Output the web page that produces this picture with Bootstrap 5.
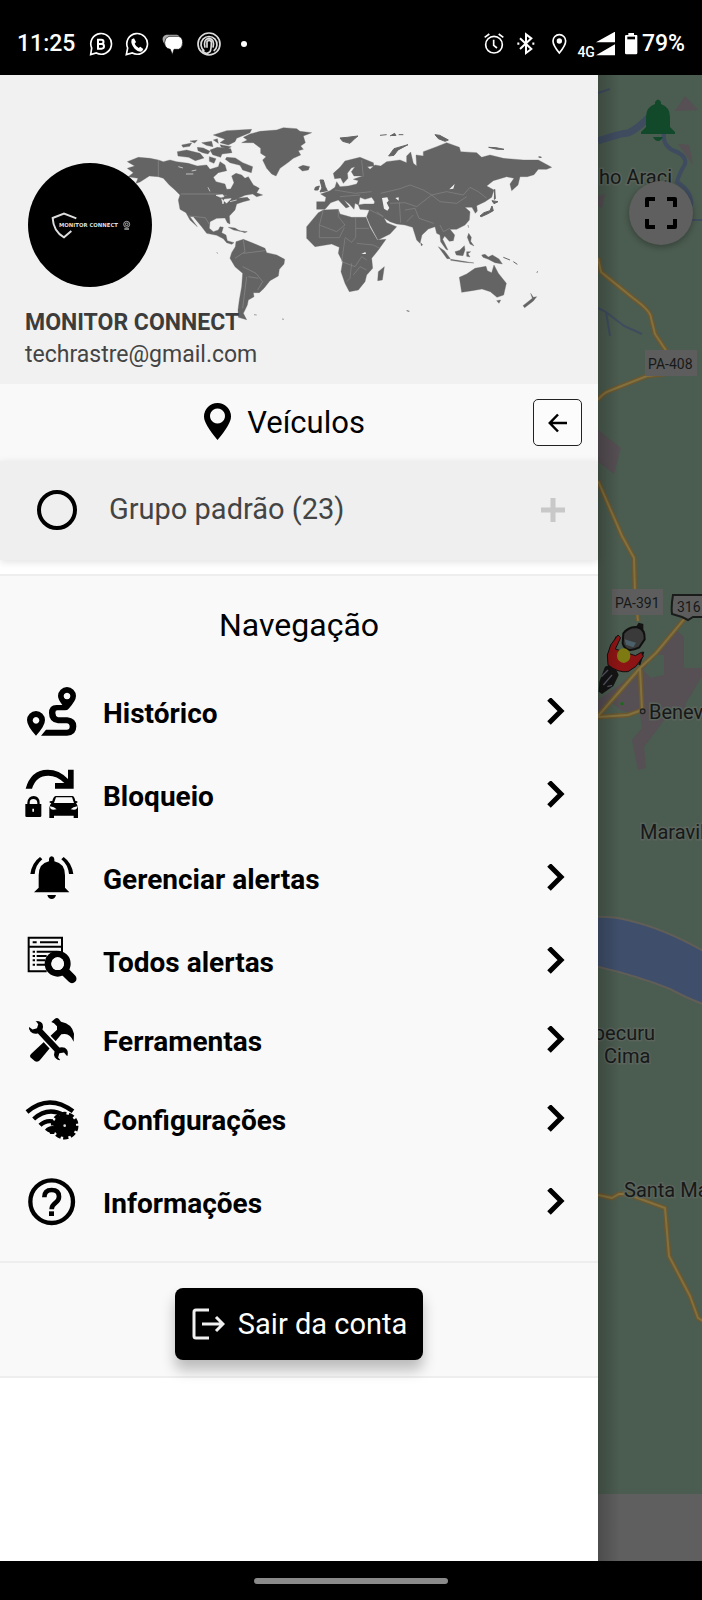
<!DOCTYPE html>
<html lang="pt-BR">
<head>
<meta charset="utf-8">
<meta name="viewport" content="width=device-width, initial-scale=1">
<title>Monitor Connect</title>
<link href="https://cdn.jsdelivr.net/npm/bootstrap@5.3.0/dist/css/bootstrap.min.css" rel="stylesheet">
<style>
  body { font-family: Roboto, "Liberation Sans", sans-serif; background: #000; color: #000; }
  svg { display: block; flex-shrink: 0; }
  .statusbar { height: 75px; padding: 13px 17px 0 17px; font-size: 23px; font-weight: 500; line-height: 28px; color: #fff; }
  .status-icons { gap: 12px; margin-left: 14px; }
  .net-label { font-size: 14px; line-height: 16px; }
  .drawer { width: 85.2%; background: #fff; z-index: 1; }
  .profile { background: #f1f1f1; padding: 88px 25px 13px; }
  .world { top: 49px; left: 120px; width: 440px; }
  .avatar { width: 124px; height: 124px; background: #000; margin-left: 3px; }
  .account { margin-top: 20px; line-height: 32px; font-size: 23px; color: #444; }
  .account strong { font-weight: 700; color: #3c3c3c; }
  .panel { background: #f9f9f9; }
  .vehicles { padding: 15px 16px 15px 36px; }
  .title { font-size: 31px; line-height: 40px; font-weight: 400; }
  .back { width: 49px; height: 47px; background: #fcfcfc; border: 1px solid #222; border-radius: 5px; }
  .group-row { height: 99px; padding: 0 33px 1px 37px; background: #efefef; box-shadow: 0 2px 8px rgba(0,0,0,.12); color: #444; font-size: 29px; }
  .round-check { appearance: none; width: 40px; height: 40px; border: 4px solid #000; border-radius: 50%; margin: 0 32px 0 0; background: transparent; }
  .round-check:checked { background: #000; }
  .rule-top { border-top: 2px solid #eee; }
  .rule-bottom { border-bottom: 2px solid #eee; }
  .nav-panel { margin-top: 14px; padding-bottom: 17px; }
  .nav-title { padding: 29px 0 26px; font-size: 32px; }
  .menu-row { height: 83px; padding: 0 33px 0 25px; gap: 24px; font-size: 28px; font-weight: 700; line-height: 40px; color: #000; text-decoration: none; }
  .menu-row.short { height: 75px; }
  .menu-row span { padding-top: 2px; }
  .exit-panel { padding: 25px 0 16px; }
  .exit { height: 72px; width: 248px; border: 0; border-radius: 8px; background: #000; color: #fff; font-size: 29px; gap: 13px; box-shadow: 0 10px 14px rgba(0,0,0,.25); }
  .exit span { padding-top: 2px; }
  .map { background: #4b5c50; min-width: 0; }
  .map-shade { background: linear-gradient(90deg, rgba(0,0,0,.2), transparent 22px); }
  .map-tools { padding: 24px 9px 0 0; gap: 40px; }
  .map-btn { border: 0; background: none; padding: 0; }
  .map-bell { margin-right: 17px; }
  .map-full { width: 64px; height: 64px; background: #5f5f5f; box-shadow: 0 2px 6px rgba(0,0,0,.3); }
  .homebar { height: 39px; }
  .pill { width: 194px; height: 6px; background: #8a8a8a; }
</style>
</head>
<body>
<div class="d-flex flex-column min-vh-100">

  <header class="statusbar d-flex align-items-center justify-content-between">
    <div class="d-flex align-items-center">
      <span>11:25</span>
      <div class="status-icons d-flex align-items-center">
        <svg width="24" height="24" viewBox="267 94 72 72" fill="none" stroke="#fff" stroke-width="5"><path d="M272 162l3-20a31 31 0 1 1 14 15z"/><path d="M294 117h10a6.500 6.500 0 0 1 0 13h-10zm0 13h11a7 7 0 0 1 0 14h-11z" stroke-width="6"/></svg>
        <svg width="24" height="24" viewBox="375 94 72 72" fill="none" stroke="#fff" stroke-width="5"><path d="M379 162l4-20a31 31 0 1 1 14 15z"/><path fill="#fff" stroke="none" d="M395 116l7-3 6 11-4 5q4 9 12 13l5-4 9 7-4 7q-10 4-22-8-13-14-9-28z"/></svg>
        <svg width="24" height="24" viewBox="483 94 72 72"><path fill="#aaa" d="M499 102h32q8 2 6 9l-40 22q-11-10-9-22 3-7 11-9z"/><path fill="#fff" stroke="#000" stroke-width="2" d="M507 107h28q13 3 13 19t-12 20h-14l-5 16-6-16q-18-3-17-21 1-15 13-18z"/></svg>
        <svg width="24" height="24" viewBox="588 93 72 72" fill="none" stroke="#ddd" stroke-width="5"><circle cx="624" cy="129" r="33"/><path d="M610 150a24 24 0 1 1 28 0M612 140q-6-26 12-28 18 2 12 28M603 148q12 16 24 4 4-6 4-30-7-8-13 0v18"/></svg>
        <svg width="24" height="24" viewBox="0 0 24 24"><circle cx="11" cy="12" r="3" fill="#fff"/></svg>
      </div>
    </div>
    <div class="d-flex align-items-center">
      <svg width="32" height="24" viewBox="376 94 96 72" fill="none" stroke="#fff" stroke-width="5"><circle cx="424" cy="132" r="25"/><path d="M423 117v17l10 8M396 110l14-10M452 110l-14-10"/></svg>
      <svg width="32" height="24" viewBox="472 94 96 72" fill="none" stroke="#fff" stroke-width="6"><path d="M502 113l34 32-16 12v-56l16 12-34 32"/><path d="M494 129h6M539 129h6" stroke-width="7"/></svg>
      <svg width="35" height="24" viewBox="568 94 105 72" fill="none" stroke="#fff" stroke-width="5"><path d="M620 157q-19-23-19-36a19 19 0 0 1 38 0q0 13-19 36z"/><circle cx="620" cy="121" r="8" fill="#fff" stroke="none"/></svg>
      <span class="net-label mt-3">4G</span>
      <svg width="20" height="24" viewBox="735 94 60 72" fill="#fff"><path d="M738 125l57-32v32zM738 164l57-33v33z"/></svg>
      <svg class="ms-2 me-1" width="15" height="24" viewBox="821 95 45 72"><path fill="#fff" d="M837 98h17v6h8q2 0 2 3v51q0 4-4 4h-29q-4 0-4-4v-51q0-3 4-3h6z"/><path fill="#000" d="M834 109h23v8h-23z"/></svg>
      <span>79%</span>
    </div>
  </header>

  <div class="d-flex flex-grow-1 overflow-hidden">
    <aside class="drawer d-flex flex-column flex-shrink-0">

      <section class="profile position-relative">
        <svg class="world position-absolute" viewBox="120 124 440 200" aria-hidden="true">
          <g transform="translate(110 110) scale(.33333)" fill="#646464" stroke="#646464" stroke-linejoin="round">
            <path d="M52 155L85 142 120 145 145 150 160 155 180 150 200 155 235 160 262 168 290 165 300 178 325 170 330 155 345 165 350 182 325 188 310 202 318 215 345 222 350 238 362 237 372 218 365 198 378 190 395 195 405 205 415 200 430 225 448 235 440 248 458 255 440 260 428 252 405 256 385 265 412 262 420 270 400 275 380 282 375 300 358 318 360 342 352 338 345 324 320 325 300 335 298 355 310 365 325 360 330 350 340 352 335 368 348 375 352 392 372 398 365 403 350 398 340 386 320 376 290 370 275 350 250 320 240 320 262 350 240 330 228 308 210 298 205 270 210 255 195 240 178 225 160 205 145 200 118 198 90 216 78 220 84 205 55 200 70 188 52 175 74 168z"/>
            <path d="M378 395L400 388 430 400 465 415 470 428 500 435 524 448 522 462 508 478 505 498 480 512 462 535 448 548 430 548 432 560 415 570 412 585 405 600 400 610 410 629 385 622 384 600 388 570 395 530 398 490 375 470 360 445 365 428 376 410z"/>
            <path d="M400 82L420 72 450 64 500 60 520 53 560 56 570 64 605 68 580 78 586 98 572 108 580 118 565 122 572 135 550 145 535 157 510 175 498 198 485 192 470 175 458 150 468 140 452 130 452 115 430 98 395 98 412 90z"/>
            <path d="M310 75L350 62 425 58 420 68 380 85 375 95 355 105 330 98 345 88z"/>
            <path d="M202 125l28-5 40 10 12 14-26 8-20-10-32-4zM215 105l30-6-6 10-20 3zM240 93l22-2-8 8zM275 98l30-4 4 16-20-4zM262 112l18 2 20 10-6 8-16-4-14-6zM300 120l22-8 40 4 4 12-30 4-4 10-24-8zM330 104l34 6-10 6-20-4zM350 142l26 2 22 14 30 12-4 18-26-8-8-14-30-8-14-10zM298 140l20 6-6 14-14-6zM325 100l-15-10 12-4z"/>
            <path d="M565 172l14-6 20 4-4 10-18 3zM355 352l20 2 16 10-20-4zM388 362l24 3-8 3zM320 428l4 2zM432 614l8 1zM516 627l6 1z"/>
          </g>
          <g transform="translate(290 110) scale(.33333)" fill="#646464" stroke="#646464" stroke-linejoin="round">
            <path d="M80 275L105 275 108 262 92 252 120 242 135 232 140 215 150 230 175 228 200 222 205 212 190 208 218 198 192 198 184 185 195 170 184 174 172 190 174 205 160 220 152 204 134 206 130 190 150 172 165 153 210 142 250 158 252 168 232 170 240 178 255 165 272 168 290 155 330 150 350 158 350 138 362 126 370 160 380 168 378 135 400 138 400 125 440 110 470 98 508 112 512 125 560 128 575 142 600 135 640 145 700 150 745 150 785 172 770 178 745 178 732 194 712 200 690 200 684 225 665 242 660 222 672 205 650 200 610 212 590 228 612 240 605 262 585 275 560 287 562 303 556 310 546 292 525 292 540 305 538 330 525 345 500 358 480 358 494 375 490 392 478 394 464 378 458 388 474 420 468 418 452 395 450 375 440 370 435 350 415 357 396 375 390 400 380 390 368 352 345 345 320 342 300 335 282 324 290 338 320 350 300 372 264 390 240 345 230 320 238 300 210 298 205 285 222 282 252 282 254 275 245 262 225 268 210 262 206 285 195 280 192 298 178 282 162 270 178 290 168 294 145 270 122 278 105 298 80 298z"/>
            <path d="M85 308L100 300 145 298 150 312 185 322 228 322 240 352 262 390 288 388 265 420 245 445 248 475 230 495 225 515 205 540 178 545 165 520 153 485 158 455 145 430 148 412 125 402 75 410 50 385 50 350z"/>
            <path d="M265 485l18-15-6 40-14 2zM508 502l22-10 25-17 33-6 4 13 13 6 7-23 13 25 24 30-8 35-20 7-20-17-25-8-30 5-31 5zM620 572l12-2-5 10zM722 550l8 12 10-2-10 13-26 20-5-6 28-22zM575 435l10-2 10 8 12-6 20 12 10 15-22-4-20-10-16-6zM495 425l14-4 14-14 2 12-6 18-20-2zM445 410l18 12 18 24-10 0zM482 448l20 3 50 8-30-2-40-6zM530 425l12 0-8 6 6 10-10-2zM536 370l8 12-2 12 10 14-12-6-8-20zM534 345l2 8zM392 398l6 6-4 4z"/>
            <path d="M570 318l12-10 18-6 6-14 4 14-18 10-18 8zM606 272l18 3-12 6zM614 238l2 28-3 2zM90 210l10 0 6 20 6 12-22 4 6-12zM76 232l12-4-4 12-10 0zM150 84l22-2 32-4-10 8-14 14-22-6zM296 138l16-22 42-12-30 16-12 16zM435 74l14 2 26 14-10 4-20-8zM596 112l22 1 24 5-20 0zM270 76l20-2M300 78l14-8 4 8M326 74l14 0M746 141l8 1zM640 442l20 8M670 455l12 8M740 487l4-2M350 602l8 2" stroke-width="3"/>
            <path fill="#f1f1f1" stroke="none" d="M276 264l16-2 4 10-6 6 8 16-6 8-10-6zM478 238l16-16-4 14zM214 432l12-6 2 6zM316 264l10-2 0 10z"/>
            <path fill="none" stroke="#919191" stroke-width="1.500" d="M272 250L330 236 360 225 400 240 425 255 470 245 520 255 540 232 565 245 590 265M425 255L450 275 500 280 530 260M300 280L345 278 380 290 425 255M328 278l4 60M345 300l30-5 12 30 44 15M350 335l20-20M215 150l5 50M135 240l60 10 50-5M150 260l60-5M240 300l40 20-20-15M100 300L88 345 140 365 165 345 145 320V298M197 322v60l-12 15-20-15M197 355h40M88 345v38h60l15-30M165 385l-10 70 40 15 20-30 15 10M185 460l-5 45-10 10M190 495l20-25 20 10M200 400l50 5 20 10M450 345l10 20 20-10"/>
          </g>
          <g transform="translate(110 110) scale(.33333)" fill="none" stroke="#999" stroke-width="1.500">
            <path d="M145 150v50M212 252H320l30 5M236 318l50 5 12 20M400 390l5 35-30 20M400 430l65-8M398 470l40 20 20 25-15 25M410 500l-12 95M415 500l30 5"/>
            <path fill="#f1f1f1" stroke="#f1f1f1" stroke-width="2" d="M318 256l20-2 4 6-10 2zM335 266l4 16 4-14 20-2-14 14M360 275l20-5M294 232l6 12M205 170l14 4M228 192l22 0M245 183l14-3"/>
          </g>
        </svg>
        <div class="avatar rounded-circle position-relative overflow-hidden">
          <svg width="124" height="124" viewBox="84 69 372 372" role="img" aria-label="Monitor Connect"><path d="M229 235L192 221 158 234Q160 274 192 292L214 273" fill="none" stroke="#ddd" stroke-width="6"/><text x="177" y="260" font-size="16" font-weight="700" fill="#ddd" font-family="DejaVu Sans, sans-serif">MONITOR CONNECT</text><g fill="none" stroke="#aaa" stroke-width="3"><circle cx="380" cy="253" r="9"/><circle cx="380" cy="253" r="4"/><path d="M373 267h14" stroke-width="5"/></g></svg>
        </div>
        <div class="account position-relative d-flex flex-column">
          <strong>MONITOR CONNECT</strong>
          <span>techrastre@gmail.com</span>
        </div>
      </section>

      <section class="panel vehicles d-flex align-items-center">
        <h2 class="title flex-grow-1 d-flex align-items-center justify-content-center gap-3 mb-0">
          <svg width="27" height="42" viewBox="0 0 27 42"><path fill-rule="evenodd" d="M13.500 38Q0 22 0 14.500a13.500 13.500 0 0 1 27 0Q27 22 13.500 38zm0-31.500a7.500 7.500 0 1 0 .01 0z"/></svg>
          Veículos
        </h2>
        <button type="button" class="back d-flex align-items-center justify-content-center p-0" aria-label="Voltar">
          <svg width="20" height="20" viewBox="0 0 20 20" fill="none" stroke="#000" stroke-width="2.500"><path d="M19 10H2M10 1.500L1.800 10l8.200 8.500"/></svg>
        </button>
      </section>

      <section class="group-row position-relative d-flex align-items-center">
        <input class="round-check" type="checkbox" id="grupo">
        <label for="grupo" class="flex-grow-1">Grupo padrão (23)</label>
        <svg width="24" height="24" viewBox="0 0 24 24"><path d="M12 0v24M0 12h24" stroke="#c8c8c8" stroke-width="5"/></svg>
      </section>

      <nav class="panel nav-panel rule-top">
        <h2 class="title nav-title text-center mb-0">Navegação</h2>

        <a href="#" class="menu-row d-flex align-items-center">
          <svg width="54" height="54" viewBox="75 48 162 162"><path fill-rule="evenodd" d="M108 197Q81 168 81 150a27 27 0 0 1 54 0q0 18-27 47zm0-56a10 10 0 1 0 .1 0zM201 51a27 27 0 0 1 27 27q0 14-22 38-4 5-11 5H172q-6 0-6 7 0 10 8 14h28q27 3 27 27 0 28-28 28H123l15-18h62q9 0 9-9t-9-10H174q-27-3-27-31 0-24 22-24h18Q174 88 174 78a27 27 0 0 1 27-27zm0 17a10 10 0 1 0 .1 0z"/></svg>
          <span class="flex-grow-1">Histórico</span>
          <svg width="18" height="30" viewBox="0 2 18 30"><path d="M2 3l12 12L2 27" fill="none" stroke="#000" stroke-width="5"/></svg>
        </a>
        <a href="#" class="menu-row d-flex align-items-center">
          <svg width="54" height="54" viewBox="75 297 162 162"><path d="M77 356Q92 300 143 299q35 0 61 28V299h17v57h-56v-17h28q-22-22-48-22-37 0-49 39z"/><path fill-rule="evenodd" d="M76 402h6v-4q2-20 19-20t18 20v4h5v36q0 3-4 3H80q-4 0-4-3zm13 0h23v-4q-1-11-12-11t-11 11zm8 14v9h5v-9z"/><path fill-rule="evenodd" d="M167 378h50q6 0 9 15l6 1v4l-4 1q6 8 6 14v31h-13v-7h-59v7h-14v-31q0-6 6-14l-5-1v-4l8-1q3-14 10-15zm1 4l-6 17h60l-6-17zm-18 27q-1 14 20 9-7-8-20-9zm82 0q1 14-20 9 7-8 20-9z"/></svg>
          <span class="flex-grow-1">Bloqueio</span>
          <svg width="18" height="30" viewBox="0 2 18 30"><path d="M2 3l12 12L2 27" fill="none" stroke="#000" stroke-width="5"/></svg>
        </a>
        <a href="#" class="menu-row d-flex align-items-center">
          <svg width="54" height="54" viewBox="75 546 162 162"><path d="M147 574v-7q1-8 8-8t8 8v7q32 6 32 42v37l13 14H102l14-14v-37q0-36 31-42zM142 675h26q-3 12-13 12t-13-12zM120 561l7 7q-20 16-23 44H91q5-34 29-51zM191 561l-7 7q20 16 23 44h13q-5-34-29-51z"/></svg>
          <span class="flex-grow-1">Gerenciar alertas</span>
          <svg width="18" height="30" viewBox="0 2 18 30"><path d="M2 3l12 12L2 27" fill="none" stroke="#000" stroke-width="5"/></svg>
        </a>
        <a href="#" class="menu-row d-flex align-items-center">
          <svg width="54" height="54" viewBox="75 45 162 162"><g fill="none" stroke="#000" stroke-width="6"><path d="M140 154H86V53h100v46M83 80h104M98 67h12M120 67h54M98 95h7M110 95h60M98 108h7M110 108h30M98 121h7M110 121h25M98 134h7M110 134h25"/></g><circle cx="173" cy="131" r="29" fill="none" stroke="#000" stroke-width="20"/><path d="M196 156l20 20" stroke="#000" stroke-width="27" stroke-linecap="round"/><circle cx="173" cy="131" r="19" fill="#f9f9f9"/></svg>
          <span class="flex-grow-1">Todos alertas</span>
          <svg width="18" height="30" viewBox="0 2 18 30"><path d="M2 3l12 12L2 27" fill="none" stroke="#000" stroke-width="5"/></svg>
        </a>
        <a href="#" class="menu-row short d-flex align-items-center">
          <svg width="54" height="54" viewBox="75 282 162 162"><path d="M154 306l10-9q6-6 12-1l7 9q33 6 39 36l-1 24q-10-24-28-23l-9 1-62 75q-6 10-17 6l-14-12q-3-5 2-10l78-73v-10l-9-9z"/><path stroke="#f9f9f9" stroke-width="5" d="M104 303q20-3 27 10 3 9 0 17l49 52q17-3 24 8 6 10 0 26l-12-14-11 2-3 10 10 12q-18 0-25-12-4-8-1-17l-48-52q-14 3-23-6-8-10-5-21l13 10 11-3 3-10z" transform="translate(-1 -2)"/></svg>
          <span class="flex-grow-1">Ferramentas</span>
          <svg width="18" height="30" viewBox="0 2 18 30"><path d="M2 3l12 12L2 27" fill="none" stroke="#000" stroke-width="5"/></svg>
        </a>
        <a href="#" class="menu-row d-flex align-items-center">
          <svg width="54" height="54" viewBox="75 519 162 162"><g fill="none" stroke="#000" stroke-width="13"><path d="M81 576q66-56 138-2M101 597q42-38 90-12M120 616q16-16 38-12M140 633q8-10 22-8"/></g><path d="M143 630h20v12h-12z"/><circle cx="194" cy="617" r="34"/><circle cx="194" cy="617" r="35" fill="none" stroke="#000" stroke-width="13" stroke-dasharray="15 7"/><circle cx="194" cy="617" r="4" fill="#ddd"/></svg>
          <span class="flex-grow-1">Configurações</span>
          <svg width="18" height="30" viewBox="0 2 18 30"><path d="M2 3l12 12L2 27" fill="none" stroke="#000" stroke-width="5"/></svg>
        </a>
        <a href="#" class="menu-row d-flex align-items-center">
          <svg width="54" height="54" viewBox="75 768 162 162"><circle cx="155" cy="845" r="64" fill="none" stroke="#000" stroke-width="13"/><path d="M133 832q0-22 22-22t22 20q0 10-10 18-12 9-12 20" fill="none" stroke="#000" stroke-width="14"/><path d="M147 874h15v14h-15z"/></svg>
          <span class="flex-grow-1">Informações</span>
          <svg width="18" height="30" viewBox="0 2 18 30"><path d="M2 3l12 12L2 27" fill="none" stroke="#000" stroke-width="5"/></svg>
        </a>
      </nav>

      <section class="panel exit-panel rule-top rule-bottom d-flex justify-content-center">
        <button type="button" class="exit d-flex align-items-center justify-content-center p-0">
          <svg width="34" height="34" viewBox="0 0 34 34" fill="none" stroke="#f0f0f0" stroke-width="3"><path d="M18 3H5Q3 3 3 5v24q0 2 2 2h13M11 17h21M25 10l7 7-7 7"/></svg>
          <span>Sair da conta</span>
        </button>
      </section>
    </aside>

    <main class="map flex-grow-1 position-relative overflow-hidden">
      <svg class="position-absolute w-100 h-100" viewBox="598 75 104 1486" preserveAspectRatio="xMinYMin slice">
        <g fill="#564f54">
          <path d="M675 111l10-15 13 14zM678 144l11 1 4 20zM598 196l7-2-3 14-4-2zM598 430l23 18-7 26-16-12z"/>
          <path d="M598 700l20-14 27-22 29-36 10 9v31l18 0v8l-16 27-2 8-16 4-24 32 2 21-8 2-6-30 10-12-2-14-18-3-14-11-7 16-13-3z"/>
        </g>
        <path fill="#4b5c50" d="M655 655l9 0 0 20-13 3-8-8z"/>
        <g fill="none" stroke="#3f4c60">
          <path d="M598 141q20-7 30-8 10-4 24-19" stroke-width="7"/><path d="M664 132q-2 12 8 18 15 5 13 14-6 10-8 18 16 10 14 24" stroke-width="4"/>
          <path d="M598 308l8 4 18 14 18 8M606 312l4 24M692 220l10 0M598 93l12-4" stroke-width="2"/>
        </g>
        <path fill="#3f4f6b" stroke="#615e58" stroke-width="2" d="M590 917q22-1 37 3 40 9 85 36v51q-20-6-42-18-35-14-80-24z"/>
        <g fill="none" stroke-linejoin="round">
          <path stroke="#6b5830" stroke-width="5" d="M598 258l3 14 32 26q18 13 18 20l4 16 12 18M598 400q4-6 11-9l38-15 18-2M598 481l24 55 12 22 1 36 3 27M598 716l42-48 16-15 50-60M640 668l2 42-14 5-30 2M598 1195l14 3 7-4 8 0 38 14 4 48 21 40 8 22 10 6"/>
          <path stroke="#82713f" stroke-width="2" d="M598 258l3 14 32 26q18 13 18 20l4 16 12 18M598 400q4-6 11-9l38-15 18-2M598 481l24 55 12 22 1 36 3 27M598 716l42-48 16-15 50-60M640 668l2 42-14 5-30 2M598 1195l14 3 7-4 8 0 38 14 4 48 21 40 8 22 10 6"/>
        </g>
        <path fill="#5f5f5f" d="M590 1494h130v80H590z"/>
        <g fill="#5d5d5d"><path d="M645 350h52v26h-52zM612 589h51v26h-51z"/><path stroke="#1a1c1c" stroke-width="2" d="M673 595h36v22h-16l-5 3-6-3-10-3q-1-8 1-19z"/></g>
        <g transform="translate(590 430) scale(.33333)">
          <path fill="#141414" d="M28 755L26 785 36 792 70 768 86 735 70 700 45 710zM146 578l14 4 0 22-12 12-14-20z"/>
          <path fill="#3a3a3a" stroke="#101010" stroke-width="6" d="M100 610q18-22 42-18 24 6 22 36l-16 24q-40 20-50-12zM80 620l-14 30M160 665l-12 40"/>
          <path fill="#8c1414" stroke="#101010" stroke-width="3" d="M62 645l22-30 8 8-16 34 60 20 18-10 6 12-22 30-24 16q-30 4-60-20l-2-30z"/>
          <ellipse cx="101" cy="677" rx="20" ry="22" fill="#7d7a12"/><path d="M104 628l34 10-8 14-22-8z" fill="#4b6068"/><path d="M34 740l20-20M40 765l26-30M52 770l14-4" stroke="#556" stroke-width="4"/>
          <circle cx="96" cy="821" r="5" fill="#1c6b1c"/><circle cx="158" cy="844" r="7" fill="#5a5257" stroke="#222" stroke-width="4"/>
        </g>
        <g font-family="Roboto, sans-serif" font-size="20" fill="#171919" stroke="#5a645c" stroke-width="3" paint-order="stroke">
          <text x="599" y="184">ho Araci</text><text x="649" y="719">Benev</text><text x="640" y="839">Maravil</text>
          <text x="655" y="1040" text-anchor="end">pecuru</text><text x="604" y="1063">Cima</text><text x="624" y="1197">Santa Ma</text>
        </g>
        <g font-family="Roboto, sans-serif" font-size="14" fill="#171919">
          <text x="648" y="369">PA-408</text><text x="615" y="608">PA-391</text><text x="677" y="612">316</text>
        </g>
      </svg>
      <div class="map-shade position-absolute top-0 start-0 w-100 h-100"></div>
      <div class="map-tools position-relative d-flex flex-column align-items-end">
        <button type="button" class="map-btn map-bell" aria-label="Alertas">
          <svg width="36" height="42" viewBox="0 0 36 42" fill="#12492a"><path d="M15 5V3q3-5 6 0v2q9 3 9 13v10l5 5v2H1v-2l5-5V18Q6 8 15 5zM13 38h10q-2 4-5 4t-5-4z"/></svg>
        </button>
        <button type="button" class="map-btn map-full rounded-circle d-flex align-items-center justify-content-center" aria-label="Tela cheia">
          <svg width="32" height="32" viewBox="0 0 32 32" fill="none" stroke="#000" stroke-width="4" stroke-linejoin="round"><path d="M2 10V2h8M22 2h8v8M30 22v8h-8M10 30H2v-8"/></svg>
        </button>
      </div>
    </main>
  </div>

  <footer class="homebar d-flex align-items-center justify-content-center"><div class="pill rounded-pill"></div></footer>
</div>
<script src="https://cdn.jsdelivr.net/npm/bootstrap@5.3.0/dist/js/bootstrap.bundle.min.js"></script>
</body>
</html>
